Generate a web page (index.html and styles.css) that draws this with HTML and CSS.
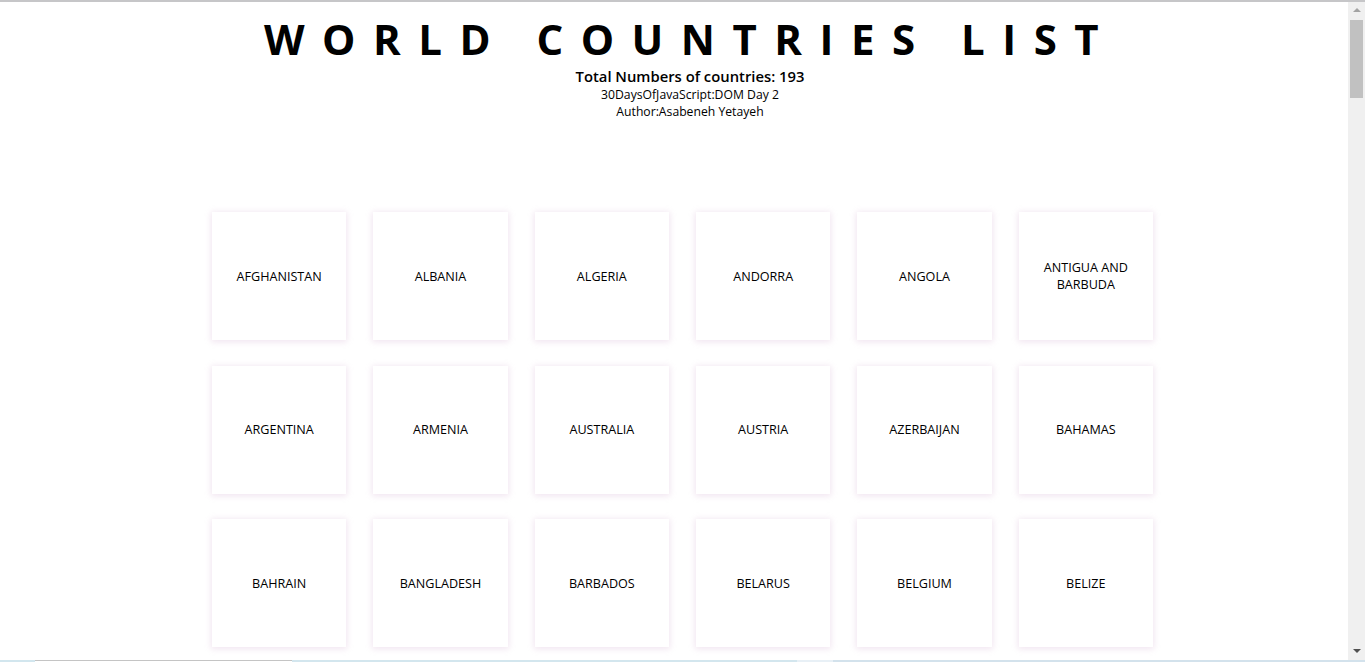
FILE: index.html
```html
<!DOCTYPE html>
<html lang="en">
<head>
<meta charset="utf-8">
<title>World Countries List</title>
<link rel="stylesheet" href="styles.css">
</head>
<body>
<div class="window">
  <main class="page">
    <header class="header">
      <h1 class="title">WORLD COUNTRIES LIST</h1>
      <h2 class="total">Total Numbers of countries: 193</h2>
      <p class="meta">30DaysOfJavaScript:DOM Day 2</p>
      <p class="meta">Author:Asabeneh Yetayeh</p>
    </header>
    <section class="countries">
      <div class="country">AFGHANISTAN</div>
      <div class="country">ALBANIA</div>
      <div class="country">ALGERIA</div>
      <div class="country">ANDORRA</div>
      <div class="country">ANGOLA</div>
      <div class="country">ANTIGUA AND BARBUDA</div>
      <div class="country">ARGENTINA</div>
      <div class="country">ARMENIA</div>
      <div class="country">AUSTRALIA</div>
      <div class="country">AUSTRIA</div>
      <div class="country">AZERBAIJAN</div>
      <div class="country">BAHAMAS</div>
      <div class="country">BAHRAIN</div>
      <div class="country">BANGLADESH</div>
      <div class="country">BARBADOS</div>
      <div class="country">BELARUS</div>
      <div class="country">BELGIUM</div>
      <div class="country">BELIZE</div>
    </section>
  </main>
  <div class="scrollbar">
    <div class="arrow arrow-up"></div>
    <div class="track"><div class="thumb"></div></div>
    <div class="arrow arrow-down"></div>
  </div>
</div>
<div class="taskbar">
  <div class="seg seg-a"></div>
  <div class="seg seg-b"></div>
  <div class="seg seg-c"></div>
  <div class="seg seg-d"></div>
  <div class="seg seg-e"></div>
</div>
</body>
</html>
```

FILE: styles.css
```css
html, body {
  margin: 0;
  padding: 0;
  height: 100%;
}

body {
  box-sizing: border-box;
  height: 100vh;
  overflow: hidden;
  border-top: 2px solid #c6c6c8;
  display: flex;
  flex-direction: column;
  background: #ffffff;
  font-family: "Open Sans", "Noto Sans", sans-serif;
  color: #000;
}

.window {
  flex: 1;
  min-height: 0;
  display: flex;
}

.page {
  flex: 1;
  min-width: 0;
  overflow: hidden;
}

.header {
  padding: 12px 0 0 32px;
  text-align: center;
}

.title {
  margin: 0;
  font-size: 42px;
  line-height: 50px;
  font-weight: 700;
  letter-spacing: 17.5px;
}

.total {
  margin: 3px 0 0;
  font-size: 14.8px;
  line-height: 18px;
  font-weight: 600;
}

.meta {
  margin: 0;
  font-size: 12.2px;
  line-height: 17px;
  font-weight: 400;
}

.total + .meta {
  margin-top: 1px;
}

.countries {
  width: 941px;
  margin: 92px 0 0 212px;
  display: grid;
  grid-template-columns: repeat(6, 1fr);
  column-gap: 27px;
  row-gap: 25.5px;
}

.country {
  height: 128px;
  display: flex;
  align-items: center;
  justify-content: center;
  text-align: center;
  padding: 0 18px;
  background: #fff;
  box-shadow: 0 1px 6px 1px rgba(238, 222, 236, 0.8);
  font-size: 12.6px;
  line-height: 17px;
  color: #000;
}

.scrollbar {
  width: 17px;
  background: #f0f0f0;
  display: flex;
  flex-direction: column;
  align-items: center;
}

.arrow {
  width: 0;
  height: 0;
  border-left: 4px solid transparent;
  border-right: 4px solid transparent;
}

.arrow-up {
  margin-top: 6px;
  border-bottom: 4px solid #a3a3a3;
}

.arrow-down {
  margin-bottom: 7px;
  border-top: 4px solid #505050;
}

.track {
  flex: 1;
  width: 100%;
  display: flex;
  justify-content: center;
}

.thumb {
  width: 13px;
  height: 78px;
  margin-top: 8px;
  background: #c1c1c1;
}

.taskbar {
  height: 2px;
  display: flex;
}

.seg {
  height: 2px;
}

.seg-a { width: 35px; background: #d2e6ee; }
.seg-b { width: 257px; background: #ffffff; box-shadow: inset 0 1px 0 #c4c4c4; }
.seg-c { width: 505px; background: #d3e6ee; }
.seg-d { width: 36px; background: #e8f0f6; }
.seg-e { flex: 1; background: #d3e2ec; }
```
